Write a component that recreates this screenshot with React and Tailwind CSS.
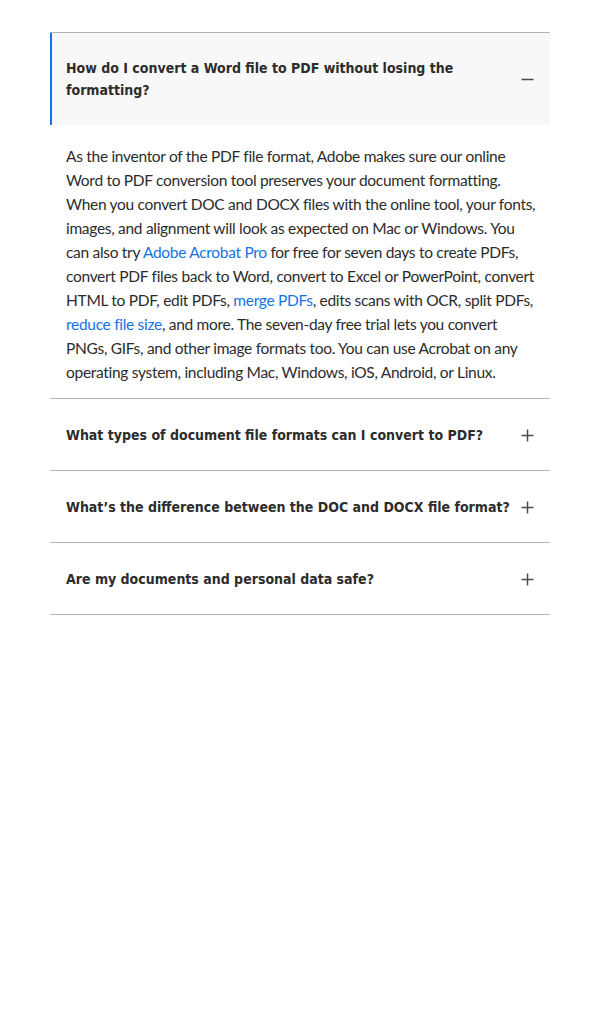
import React, { useState } from 'react';

const faqs = [
  { q: 'How do I convert a Word file to PDF without losing the formatting?' },
  { q: 'What types of document file formats can I convert to PDF?' },
  { q: 'What’s the difference between the DOC and DOCX file format?' },
  { q: 'Are my documents and personal data safe?' },
];

function Icon({ open }) {
  return (
    <svg width="13" height="13" viewBox="0 0 13 13" className="shrink-0 text-[#4b4b4b]">
      <path d="M0.5 6.5h12" stroke="currentColor" strokeWidth="1.5" />
      {!open && <path d="M6.5 0.5v12" stroke="currentColor" strokeWidth="1.5" />}
    </svg>
  );
}

const Link = ({ children }) => (
  <a href="#" className="text-[#1473e6]">{children}</a>
);

export default function App() {
  const [open, setOpen] = useState(0);

  return (
    <div className="min-h-[1024px] bg-white pt-8 px-[50px]">
      <div className="border-t border-[#b3b3b3]">
        {faqs.map((item, idx) => {
          const isOpen = open === idx;
          return (
            <div key={idx} className="border-b border-[#b3b3b3]">
              <button
                onClick={() => setOpen(isOpen ? -1 : idx)}
                className={`w-full flex items-center justify-between gap-[10px] text-left pr-4 ${
                  isOpen
                    ? 'bg-[#f8f8f8] border-l-2 border-[#1473e6] pl-[14px] py-6'
                    : 'pl-4 pt-[25px] pb-6'
                }`}
              >
                <span className="font-['DejaVu_Sans_Condensed','DejaVu_Sans',sans-serif] font-bold text-[14px] leading-[22px] text-[#2c2c2c]">
                  {item.q}
                </span>
                <Icon open={isOpen} />
              </button>
              {isOpen && (
                <div className="pl-4 pr-3 pt-[19px] pb-[14px] font-['Lato',sans-serif] text-[15.5px] tracking-[-0.3px] leading-6 text-[#2c2c2c] whitespace-nowrap">
                  <p>
                    As the inventor of the PDF file format, Adobe makes sure our online<br />
                    Word to PDF conversion tool preserves your document formatting.<br />
                    When you convert DOC and DOCX files with the online tool, your fonts,<br />
                    images, and alignment will look as expected on Mac or Windows. You<br />
                    can also try <Link>Adobe Acrobat Pro</Link> for free for seven days to create PDFs,<br />
                    convert PDF files back to Word, convert to Excel or PowerPoint, convert<br />
                    HTML to PDF, edit PDFs, <Link>merge PDFs</Link>, edits scans with OCR, split PDFs,<br />
                    <Link>reduce file size</Link>, and more. The seven-day free trial lets you convert<br />
                    PNGs, GIFs, and other image formats too. You can use Acrobat on any<br />
                    operating system, including Mac, Windows, iOS, Android, or Linux.
                  </p>
                </div>
              )}
            </div>
          );
        })}
      </div>
    </div>
  );
}
